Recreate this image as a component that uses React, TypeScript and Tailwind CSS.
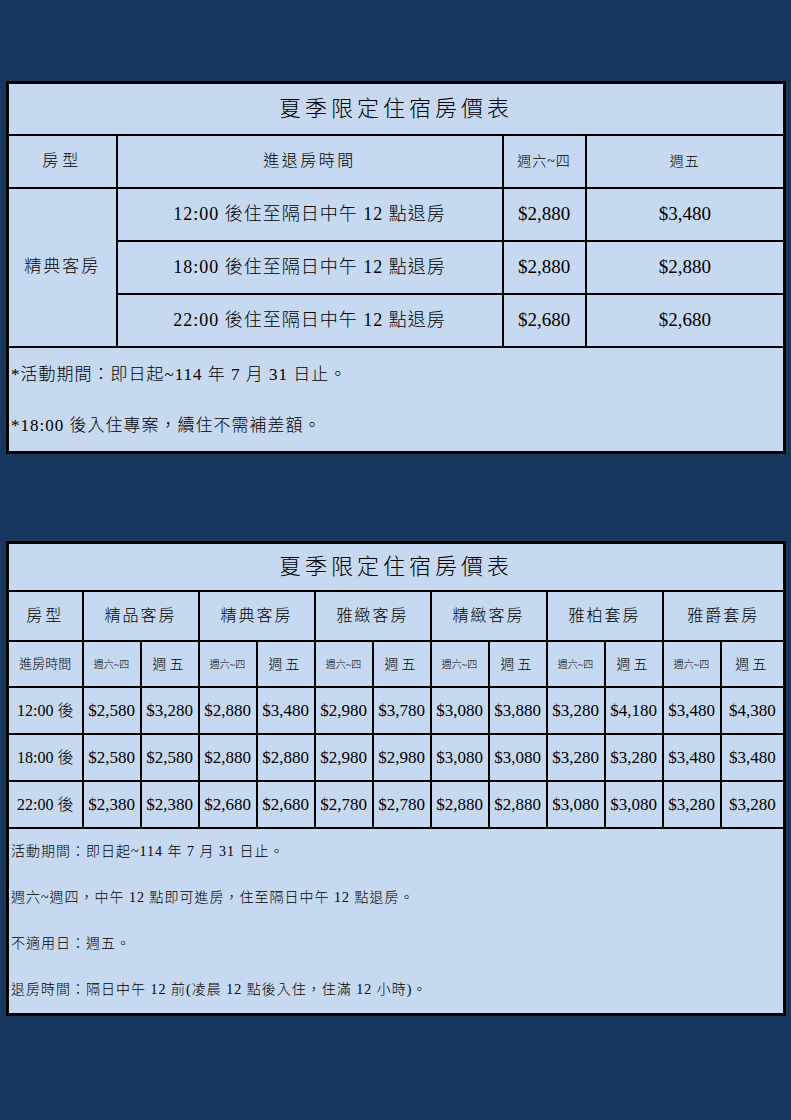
const font = "font-['Liberation_Serif','Noto_Sans_CJK_TC',serif] font-light";

const cell = "border-2 border-black text-center align-middle p-0 whitespace-nowrap";

const rows1 = [
  ["12:00 後住至隔日中午 12 點退房", "$2,880", "$3,480"],
  ["18:00 後住至隔日中午 12 點退房", "$2,880", "$2,880"],
  ["22:00 後住至隔日中午 12 點退房", "$2,680", "$2,680"],
];

const rooms = ["精品客房", "精典客房", "雅緻客房", "精緻客房", "雅柏套房", "雅爵套房"];

const rows2: [string, string[]][] = [
  ["12:00 後", ["$2,580", "$3,280", "$2,880", "$3,480", "$2,980", "$3,780", "$3,080", "$3,880", "$3,280", "$4,180", "$3,480", "$4,380"]],
  ["18:00 後", ["$2,580", "$2,580", "$2,880", "$2,880", "$2,980", "$2,980", "$3,080", "$3,080", "$3,280", "$3,280", "$3,480", "$3,480"]],
  ["22:00 後", ["$2,380", "$2,380", "$2,680", "$2,680", "$2,780", "$2,780", "$2,880", "$2,880", "$3,080", "$3,080", "$3,280", "$3,280"]],
];

const notes2 = [
  "活動期間：即日起~114 年 7 月 31 日止。",
  "週六~週四，中午 12 點即可進房，住至隔日中午 12 點退房。",
  "不適用日：週五。",
  "退房時間：隔日中午 12 前(凌晨 12 點後入住，住滿 12 小時)。",
];

function FirstTable() {
  return (
    <table className="w-[777px] table-fixed border-collapse border-[3px] border-black bg-[#c6d9f1] text-black">
      <colgroup>
        <col className="w-[109px]" />
        <col className="w-[386px]" />
        <col className="w-[83px]" />
        <col className="w-[199px]" />
      </colgroup>
      <tbody>
        <tr className="h-[52px]">
          <td colSpan={4} className={`${cell} text-[22px] tracking-[4px]`}>
            夏季限定住宿房價表
          </td>
        </tr>
        <tr className="h-[53px]">
          <td className={`${cell} text-[16px] tracking-[4px]`}>房型</td>
          <td className={`${cell} text-[16px] tracking-[2.5px]`}>進退房時間</td>
          <td className={`${cell} text-[14px] tracking-[1px]`}>週六~四</td>
          <td className={`${cell} text-[14px] tracking-[1px]`}>週五</td>
        </tr>
        {rows1.map((r, i) => (
          <tr key={i} className="h-[53px]">
            {i === 0 && (
              <td rowSpan={3} className={`${cell} text-[17px] tracking-[2px]`}>
                精典客房
              </td>
            )}
            <td className={`${cell} text-[18px] tracking-[1px]`}>{r[0]}</td>
            <td className={`${cell} text-[19px]`}>{r[1]}</td>
            <td className={`${cell} text-[19px]`}>{r[2]}</td>
          </tr>
        ))}
        <tr>
          <td colSpan={4} className={`${cell} text-left text-[17px] tracking-[1px] pl-[2px] pt-[1px] leading-[51px]`}>
            <div>*活動期間：即日起~114 年 7 月 31 日止。</div>
            <div>*18:00 後入住專案，續住不需補差額。</div>
          </td>
        </tr>
      </tbody>
    </table>
  );
}

function SecondTable() {
  return (
    <table className="w-[777px] table-fixed border-collapse border-[3px] border-black bg-[#c6d9f1] text-black">
      <colgroup>
        <col className="w-[75px]" />
        {Array.from({ length: 12 }).map((_, i) => (
          <col key={i} className={i === 11 ? "w-[64px]" : "w-[58px]"} />
        ))}
      </colgroup>
      <tbody>
        <tr className="h-[49px]">
          <td colSpan={13} className={`${cell} text-[22px] tracking-[4px]`}>
            夏季限定住宿房價表
          </td>
        </tr>
        <tr className="h-[50px]">
          <td className={`${cell} text-[16px] tracking-[3px]`}>房型</td>
          {rooms.map((r) => (
            <td key={r} colSpan={2} className={`${cell} text-[16px] tracking-[2px]`}>
              {r}
            </td>
          ))}
        </tr>
        <tr className="h-[46px]">
          <td className={`${cell} text-[13px]`}>進房時間</td>
          {rooms.map((r) => [
            <td key={r + "a"} className={`${cell} text-[10px]`}>
              週六~四
            </td>,
            <td key={r + "b"} className={`${cell} text-[14px] tracking-[3px]`}>
              週五
            </td>,
          ])}
        </tr>
        {rows2.map(([t, prices]) => (
          <tr key={t} className="h-[47px]">
            <td className={`${cell} text-[16px]`}>{t}</td>
            {prices.map((p, i) => (
              <td key={i} className={`${cell} text-[17px]`}>
                {p}
              </td>
            ))}
          </tr>
        ))}
        <tr>
          <td colSpan={13} className={`${cell} text-left text-[14px] tracking-[1px] pl-[2px] leading-[46px]`}>
            {notes2.map((n) => (
              <div key={n}>{n}</div>
            ))}
          </td>
        </tr>
      </tbody>
    </table>
  );
}

export default function App() {
  return (
    <div className={`min-h-[1120px] bg-[#17375e] px-[6px] pt-[81px] ${font}`}>
      <FirstTable />
      <div className="h-[87px]" />
      <SecondTable />
    </div>
  );
}
